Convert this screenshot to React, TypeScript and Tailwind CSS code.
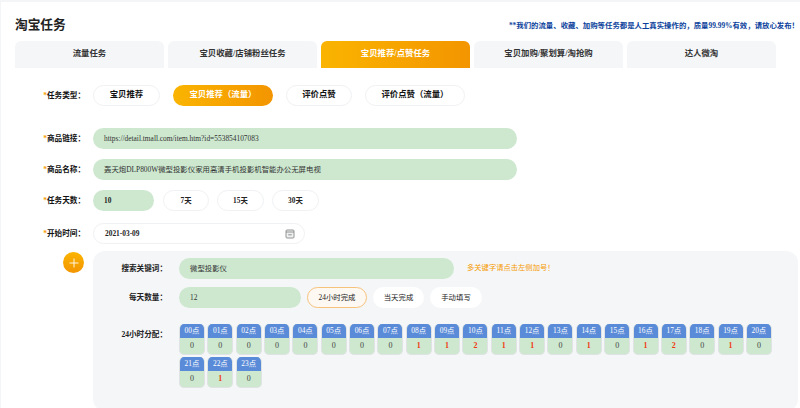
import React from "react";
import { Plus } from "lucide-react";

const tabs = ["流量任务", "宝贝收藏/店铺粉丝任务", "宝贝推荐/点赞任务", "宝贝加购/聚划算/淘抢购", "达人微淘"];
const taskTypes = [
  { label: "宝贝推荐", width: "w-[67px]" },
  { label: "宝贝推荐（流量）", width: "w-[100px]", active: true },
  { label: "评价点赞", width: "w-[66px]" },
  { label: "评价点赞（流量）", width: "w-[100px]" },
];
const days = [
  { label: "7天", width: "w-[46px]" },
  { label: "15天", width: "w-[47px]" },
  { label: "30天", width: "w-[47px]" },
];
const counts = [0, 0, 0, 0, 0, 0, 0, 0, 1, 1, 2, 1, 1, 0, 1, 0, 1, 2, 0, 1, 0, 0, 1, 0];

const Label = ({ text }: { text: string }) => (
  <div className="w-[84px] shrink-0 text-right text-[7.6px] font-bold text-[#111]">
    <span className="text-[#f59a00]">*</span>
    {text}：
  </div>
);

export default function App() {
  return (
    <div className="w-[800px] h-[408px] overflow-hidden bg-white border-t-2 border-l border-[#f4f5f7] font-['Liberation_Serif','Noto_Sans_CJK_SC',serif]">
      <div className="flex items-center justify-between pl-[14px] pr-[1px] pt-[5px] h-[39px]">
        <h1 className="text-[12.7px] leading-[20px] font-bold text-[#222] font-['Noto_Sans_CJK_SC',sans-serif]">淘宝任务</h1>
        <p className="text-[7.4px] font-bold text-[#0b3f9c] mt-[4px]">**我们的流量、收藏、加购等任务都是人工真实操作的，质量99.99%有效，请放心发布！</p>
      </div>

      <div className="flex gap-[4px] pl-[14px]">
        {tabs.map((tab, i) => (
          <div
            key={tab}
            className={
              i === 2
                ? "w-[149px] h-[27px] flex items-center justify-center rounded-t-[6px] text-[8.4px] font-bold text-white bg-gradient-to-r from-[#fab400] to-[#f39500]"
                : "w-[149px] h-[27px] flex items-center justify-center rounded-t-[6px] text-[8.4px] font-bold text-[#333] bg-[#f4f6f8]"
            }
          >
            {tab}
          </div>
        ))}
      </div>

      <div className="flex items-center mt-[17px] h-[21px]">
        <Label text="任务类型" />
        <div className="flex gap-[13px] ml-[8px]">
          {taskTypes.map((t) => (
            <div
              key={t.label}
              className={
                t.active
                  ? `${t.width} h-[21px] flex items-center justify-center rounded-full text-[8.4px] font-bold text-white bg-gradient-to-r from-[#fab400] to-[#f39500]`
                  : `${t.width} h-[21px] flex items-center justify-center rounded-full text-[8.4px] font-bold text-[#111] bg-white border border-[#f0f1f3]`
              }
            >
              {t.label}
            </div>
          ))}
        </div>
      </div>

      <div className="flex items-center mt-[22px] h-[21px]">
        <Label text="商品链接" />
        <div className="ml-[8px] w-[424px] h-[21px] flex items-center pl-[11px] rounded-full bg-[#cde8cf] text-[7.4px] text-[#333]">
          https://detail.tmall.com/item.htm?id=553854107083
        </div>
      </div>

      <div className="flex items-center mt-[10px] h-[21px]">
        <Label text="商品名称" />
        <div className="ml-[8px] w-[424px] h-[21px] flex items-center pl-[11px] rounded-full bg-[#cde8cf] text-[7.4px] text-[#333]">
          轰天炮DLP800W微型投影仪家用高清手机投影机智能办公无屏电视
        </div>
      </div>

      <div className="flex items-center mt-[10px] h-[21px]">
        <Label text="任务天数" />
        <div className="ml-[8px] w-[61px] h-[21px] flex items-center pl-[11px] rounded-full bg-[#cde8cf] text-[7.4px] font-bold text-[#222]">10</div>
        <div className="flex gap-[8px] ml-[9px]">
          {days.map((d) => (
            <div key={d.label} className={`${d.width} h-[21px] flex items-center justify-center rounded-full border border-[#f0f1f3] text-[7.4px] font-bold text-[#222]`}>
              {d.label}
            </div>
          ))}
        </div>
      </div>

      <div className="flex items-center mt-[12px] h-[21px]">
        <Label text="开始时间" />
        <div className="ml-[8px] w-[212px] h-[21px] flex items-center justify-between pl-[11px] pr-[9px] rounded-full border border-[#f0f1f3] text-[7.4px] font-bold text-[#222]">
          2021-03-09
          <svg width="10" height="10" viewBox="0 0 10 10" fill="#eef0f1" stroke="#888" strokeWidth="0.9">
            <rect x="1" y="1" width="8" height="8" rx="1" />
            <path d="M1 3h8M3.2 5.8h3.6" />
          </svg>
        </div>
      </div>

      <div className="flex items-start mt-[7px]">
        <div className="ml-[62px] mt-[1px] w-[21px] h-[21px] shrink-0 flex items-center justify-center rounded-full bg-gradient-to-b from-[#fab400] to-[#f39500]">
          <Plus size={14} strokeWidth={1.5} color="#fff" />
        </div>
        <div className="ml-[9px] w-[705px] h-[160px] rounded-[12px] bg-[#f5f6f8] pt-[7px]">
          <div className="flex items-center h-[21px]">
            <div className="w-[74px] text-right text-[7.6px] font-bold text-[#222]">搜索关键词：</div>
            <div className="ml-[12px] w-[275px] h-[21px] flex items-center pl-[11px] rounded-full bg-[#cde8cf] text-[7.4px] text-[#333]">微型投影仪</div>
            <div className="ml-[13px] text-[7.3px] text-[#f59a00]">多关键字请点击左侧加号！</div>
          </div>

          <div className="flex items-center mt-[8px] h-[21px]">
            <div className="w-[74px] text-right text-[7.6px] font-bold text-[#222]">每天数量：</div>
            <div className="ml-[12px] w-[122px] h-[21px] flex items-center pl-[11px] rounded-full bg-[#cde8cf] text-[7.4px] text-[#333]">12</div>
            <div className="ml-[6px] w-[60px] h-[21px] flex items-center justify-center rounded-full border border-[#f7c27a] bg-[#fdf8f2] text-[7.4px] text-[#222]">24小时完成</div>
            <div className="ml-[6px] w-[51px] h-[21px] flex items-center justify-center rounded-full bg-white text-[7.4px] text-[#222]">当天完成</div>
            <div className="ml-[6px] w-[52px] h-[21px] flex items-center justify-center rounded-full bg-white text-[7.4px] text-[#222]">手动填写</div>
          </div>

          <div className="flex items-start mt-[16px]">
            <div className="w-[74px] text-right text-[7.6px] leading-[14px] font-bold text-[#222] mt-[4px]">24小时分配：</div>
            <div className="ml-[12px] grid grid-cols-[repeat(21,26px)] gap-x-[2.35px] gap-y-[2px]">
              {counts.map((n, h) => (
                <div key={h} className="h-[31px] rounded-[5px] overflow-hidden border border-t-0 border-[#e0e3e4] bg-[#cde8cf] text-[7.4px] text-center">
                  <div className="h-[14px] -mx-px leading-[14px] bg-[#5a8bd8] text-white">{String(h).padStart(2, "0")}点</div>
                  <div className={n > 0 ? "h-[16px] leading-[16px] text-[8px] font-bold text-[#f03a10]" : "h-[16px] leading-[16px] text-[8px] text-[#444]"}>{n}</div>
                </div>
              ))}
            </div>
          </div>
        </div>
      </div>
    </div>
  );
}
